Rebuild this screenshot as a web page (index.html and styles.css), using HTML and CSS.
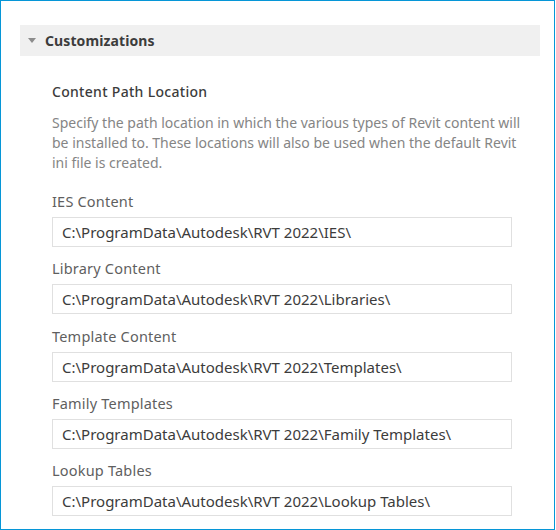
FILE: index.html
```html
<!DOCTYPE html>
<html>
<head>
<meta charset="utf-8">
<link rel="stylesheet" href="styles.css">
</head>
<body>
<div class="frame">
  <div class="section-header">
    <span class="caret"></span>
    <span class="section-title">Customizations</span>
  </div>
  <div class="section-body">
    <div class="heading">Content Path Location</div>
    <p class="desc">Specify the path location in which the various types of Revit content will be installed to. These locations will also be used when the default Revit ini file is created.</p>
    <div class="group">
      <div class="label">IES Content</div>
      <div class="field">C:\ProgramData\Autodesk\RVT 2022\IES\</div>
    </div>
    <div class="group">
      <div class="label">Library Content</div>
      <div class="field">C:\ProgramData\Autodesk\RVT 2022\Libraries\</div>
    </div>
    <div class="group">
      <div class="label">Template Content</div>
      <div class="field">C:\ProgramData\Autodesk\RVT 2022\Templates\</div>
    </div>
    <div class="group">
      <div class="label">Family Templates</div>
      <div class="field">C:\ProgramData\Autodesk\RVT 2022\Family Templates\</div>
    </div>
    <div class="group">
      <div class="label">Lookup Tables</div>
      <div class="field">C:\ProgramData\Autodesk\RVT 2022\Lookup Tables\</div>
    </div>
  </div>
</div>
</body>
</html>
```
FILE: styles.css
```css
html, body {
  margin: 0;
  padding: 0;
  background: #ffffff;
}
body {
  font-family: "Noto Sans", "Open Sans", sans-serif;
  font-size: 14px;
}
.frame {
  box-sizing: border-box;
  width: 555px;
  height: 530px;
  border: 1px solid #0696d7;
  padding: 24px 14px 0 19px;
  overflow: hidden;
}
.section-header {
  display: flex;
  align-items: center;
  height: 31px;
  background: #f0f0f0;
}
.caret {
  width: 0;
  height: 0;
  margin-left: 8px;
  margin-right: 9px;
  border-left: 4px solid transparent;
  border-right: 4px solid transparent;
  border-top: 5px solid #8c8c8c;
}
.section-title {
  font-weight: 700;
  color: #3c3c3c;
  font-size: 14px;
  line-height: 31px;
  letter-spacing: 0.1px;
}
.section-body {
  padding: 26px 8px 0 32px;
}
.heading {
  font-weight: 500;
  color: #3c3c3c;
  font-size: 14px;
  line-height: 20px;
  letter-spacing: 0.3px;
}
.desc {
  margin: 11px 0 0 0;
  color: #858585;
  font-size: 14px;
  line-height: 20px;
}
.group {
  margin-top: 18px;
  margin-right: 20px;
}
.group + .group {
  margin-top: 11.3px;
}
.label {
  color: #5f5f5f;
  font-size: 14.5px;
  line-height: 20px;
  letter-spacing: 0.2px;
  margin-bottom: 6px;
}
.field {
  box-sizing: border-box;
  height: 30px;
  border: 1px solid #e0e0e0;
  padding: 0 9px;
  color: #3c3c3c;
  font-size: 15px;
  line-height: 28px;
  white-space: nowrap;
}
```
